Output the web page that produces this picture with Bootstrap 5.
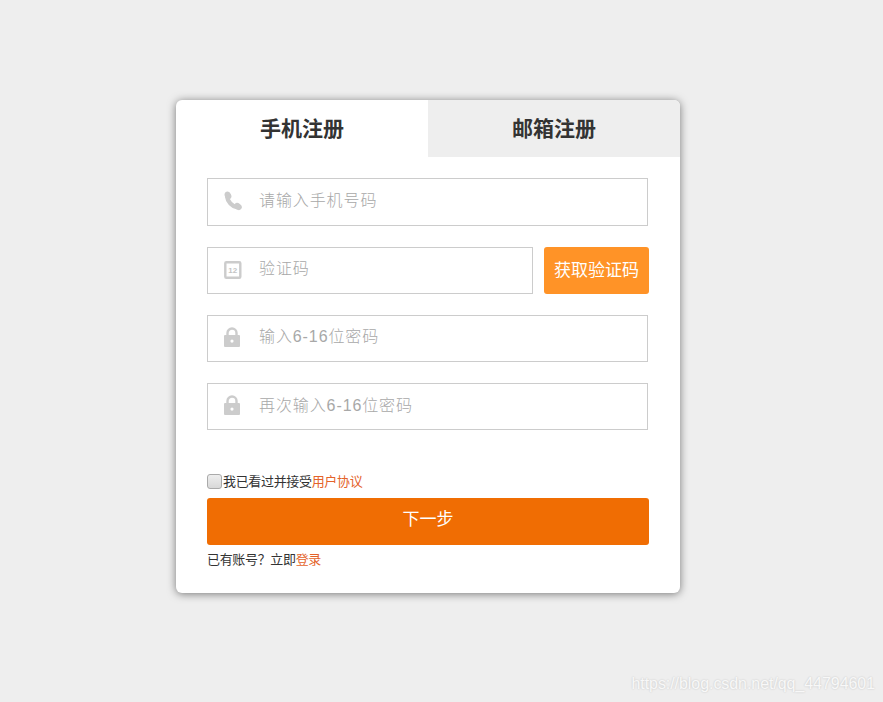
<!DOCTYPE html>
<html lang="zh">
<head>
<meta charset="utf-8">
<title>注册</title>
<link rel="stylesheet" href="https://cdn.jsdelivr.net/npm/bootstrap@5.3.0/dist/css/bootstrap.min.css">
<style>
html,body{height:100%}
body{background:#eee;font-family:"Liberation Sans","Noto Sans CJK SC",sans-serif;color:#333;height:702px;overflow:hidden;padding:100px 0 0 176px;position:relative}
.reg-box{width:504px;height:493px;background:#fff;border-radius:6px;box-shadow:0 1px 8px rgba(0,0,0,.5);overflow:hidden}
.reg-tab{width:252px;height:57px;font-size:21px;font-weight:700;color:#333;line-height:57px;text-align:center;padding:0}
.reg-tab-off{background:#eee}
.reg-form{padding:21px 31px 0}
.reg-field{height:48px;border:1px solid #ccc;padding-left:16px;width:441px}
.reg-field-sm{width:326px;height:47px}
.reg-field-h47{height:47px}
.reg-ico{width:18px;height:20px;flex:none;margin-right:17px;margin-bottom:2px}
.reg-ico-lock{margin-bottom:4px}
.reg-input{border:0;outline:0;padding:0;flex:1;min-width:0;height:100%;font-size:16px;letter-spacing:.9px;background:transparent;margin-top:-3px}
.reg-input-low{margin-top:-1px}
.reg-input::placeholder{color:#a8a8a8;opacity:1;font-weight:300}
.reg-code{width:105px;height:47px;background:#ff9327;color:#fff;border:0;border-radius:3px;font-size:17px;padding:0;margin-left:11px}
.reg-gap{margin-top:21px}
.reg-agree{font-size:13px;letter-spacing:-.33px;margin-top:43px;height:17px;color:#333;line-height:17px}
.reg-check{width:15px;height:15px;margin:0 1px 0 0;flex:none;border:1px solid #aaa;border-radius:3px;background:linear-gradient(#eee,#d8d8d8);appearance:none;-webkit-appearance:none}
.reg-link{color:#e4632a;text-decoration:none}
.reg-next{width:442px;height:47px;background:#f06d03;color:#fff;border:0;border-radius:3px;font-size:17px;margin-top:8px;padding:0 0 3px;display:block}
.reg-login{font-size:13px;letter-spacing:-.33px;margin-top:6px;line-height:17px;color:#333}
.reg-mark{position:absolute;right:8px;top:674px;font-size:16px;line-height:20px;color:#f8f8f8;text-shadow:0 0 2px rgba(0,0,0,.2);letter-spacing:-.06px;white-space:nowrap}
</style>
</head>
<body>
<div class="reg-box">
  <div class="d-flex">
    <div class="reg-tab">手机注册</div>
    <div class="reg-tab reg-tab-off">邮箱注册</div>
  </div>
  <form class="reg-form">
    <div class="reg-field d-flex align-items-center">
      <svg class="reg-ico" viewBox="0 0 18 20"><path fill="none" stroke="#ccc" stroke-width="4.200" stroke-linecap="round" d="M3 5.500C3.500 10.500 8 15.500 13.500 16.500"/><ellipse cx="4" cy="4.500" rx="3.200" ry="4" fill="#ccc" transform="rotate(-25 4 4.500)"/><ellipse cx="14" cy="15.500" rx="4" ry="3.200" fill="#ccc" transform="rotate(35 14 15.500)"/></svg>
      <input class="reg-input" type="text" placeholder="请输入手机号码">
    </div>
    <div class="d-flex reg-gap">
      <div class="reg-field reg-field-sm d-flex align-items-center">
        <svg class="reg-ico" viewBox="0 0 18 20"><rect x="1.300" y="2.300" width="15" height="15.400" rx="1" fill="none" stroke="#ccc" stroke-width="2.400"/><text x="8.800" y="13" text-anchor="middle" font-size="8" font-weight="700" fill="#c4c4c4" font-family="Liberation Sans">12</text></svg>
        <input class="reg-input" type="text" placeholder="验证码">
      </div>
      <button type="button" class="reg-code">获取验证码</button>
    </div>
    <div class="reg-field reg-field-h47 d-flex align-items-center reg-gap">
      <svg class="reg-ico reg-ico-lock" viewBox="1 0 18 20"><path fill="none" stroke="#ccc" stroke-width="2.400" d="M4.500 9V6a4.500 4.500 0 0 1 9 0v3"/><path fill="#ccc" fill-rule="evenodd" d="M2 8h14a1 1 0 0 1 1 1v10a1 1 0 0 1-1 1H2a1 1 0 0 1-1-1V9a1 1 0 0 1 1-1zm7 4.500a1.600 1.600 0 1 0 0 3.200 1.600 1.600 0 0 0 0-3.200z"/></svg>
      <input class="reg-input" type="password" placeholder="输入6-16位密码">
    </div>
    <div class="reg-field reg-field-h47 d-flex align-items-center reg-gap">
      <svg class="reg-ico reg-ico-lock" viewBox="1 0 18 20"><path fill="none" stroke="#ccc" stroke-width="2.400" d="M4.500 9V6a4.500 4.500 0 0 1 9 0v3"/><path fill="#ccc" fill-rule="evenodd" d="M2 8h14a1 1 0 0 1 1 1v10a1 1 0 0 1-1 1H2a1 1 0 0 1-1-1V9a1 1 0 0 1 1-1zm7 4.500a1.600 1.600 0 1 0 0 3.200 1.600 1.600 0 0 0 0-3.200z"/></svg>
      <input class="reg-input reg-input-low" type="password" placeholder="再次输入6-16位密码">
    </div>
    <div class="reg-agree d-flex align-items-center">
      <input class="reg-check" type="checkbox" id="agree"><label for="agree">我已看过并接受<a class="reg-link" href="#">用户协议</a></label>
    </div>
    <button type="button" class="reg-next">下一步</button>
    <div class="reg-login">已有账号？立即<a class="reg-link" href="#">登录</a></div>
  </form>
</div>
<div class="reg-mark">https://blog.csdn.net/qq_44794601</div>
<script src="https://cdn.jsdelivr.net/npm/bootstrap@5.3.0/dist/js/bootstrap.bundle.min.js"></script>
</body>
</html>
